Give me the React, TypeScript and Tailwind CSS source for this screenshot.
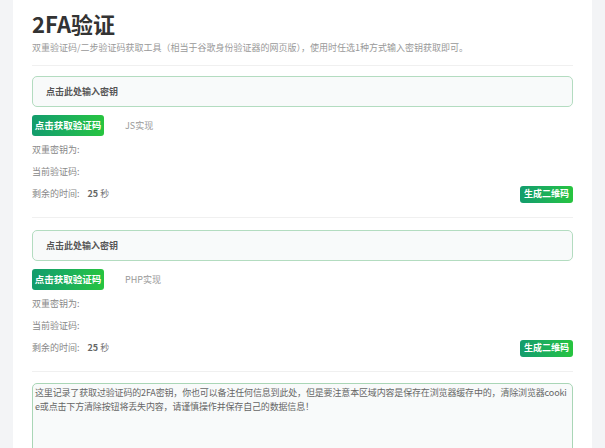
import { useState } from "react";

const FONT = { fontFamily: '"Noto Sans CJK SC", "Noto Sans", sans-serif' };

function Section({ impl }: { impl: string }) {
  const [secret, setSecret] = useState("");
  return (
    <div className="flex flex-col">
      <input
        value={secret}
        onChange={(e) => setSecret(e.target.value)}
        placeholder="点击此处输入密钥"
        className="h-[31px] w-full rounded-[5px] border border-[#b3dcc0] bg-[#f8fafa] px-[13px] text-[9px] font-bold text-[#555] outline-none placeholder:text-[#555]"
      />
      <div className="mt-[8px] flex items-center">
        <button className="h-[21px] w-[72px] rounded-[3px] bg-gradient-to-r from-[#139c6c] to-[#27c43e] text-[9.5px] font-bold text-white">
          点击获取验证码
        </button>
        <span className="ml-[21px] text-[9px] text-[#999]">{impl}</span>
      </div>
      <div className="mt-[3px] flex h-[22px] items-center text-[9px] text-[#888]">双重密钥为:</div>
      <div className="flex h-[22px] items-center text-[9px] text-[#888]">当前验证码:</div>
      <div className="flex h-[22px] items-center justify-between text-[9px] text-[#888]">
        <span>
          剩余的时间: <b className="ml-[6px] font-bold text-[#666]">25</b> <span className="text-[#777]">秒</span>
        </span>
        <button className="h-[17px] w-[53px] rounded-[3px] bg-gradient-to-r from-[#139c6c] to-[#27c43e] text-[9px] font-bold text-white">
          生成二维码
        </button>
      </div>
    </div>
  );
}

export default function App() {
  return (
    <div className="h-[448px] overflow-hidden bg-[#f3f4f6] px-[13px]" style={FONT}>
      <div className="h-full bg-white px-[19px]">
        <h1 className="pt-[9px] text-[22px] font-bold leading-[28px] text-[#333]">2FA验证</h1>
        <p className="mt-[4px] text-[9px] leading-[14px] text-[#999]">
          双重验证码/二步验证码获取工具（相当于谷歌身份验证器的网页版），使用时任选1种方式输入密钥获取即可。
        </p>
        <div className="mt-[10px] h-px bg-[#f0f0f0]" />
        <div className="mt-[10px]">
          <Section impl="JS实现" />
        </div>
        <div className="my-[12px] h-px bg-[#f0f0f0]" />
        <Section impl="PHP实现" />
        <div className="mt-[12px] mb-[11px] h-px bg-[#f0f0f0]" />
        <textarea
          defaultValue="这里记录了获取过验证码的2FA密钥，你也可以备注任何信息到此处，但是要注意本区域内容是保存在浏览器缓存中的，清除浏览器cookie或点击下方清除按钮将丢失内容，请谨慎操作并保存自己的数据信息！"
          className="h-[120px] w-full resize-none break-all rounded-[5px] border border-[#a9d6b6] bg-[#f8fafa] px-[2px] pt-[2px] text-[9px] leading-[14px] tracking-[-0.16px] text-[#666] outline-none"
        />
      </div>
    </div>
  );
}
